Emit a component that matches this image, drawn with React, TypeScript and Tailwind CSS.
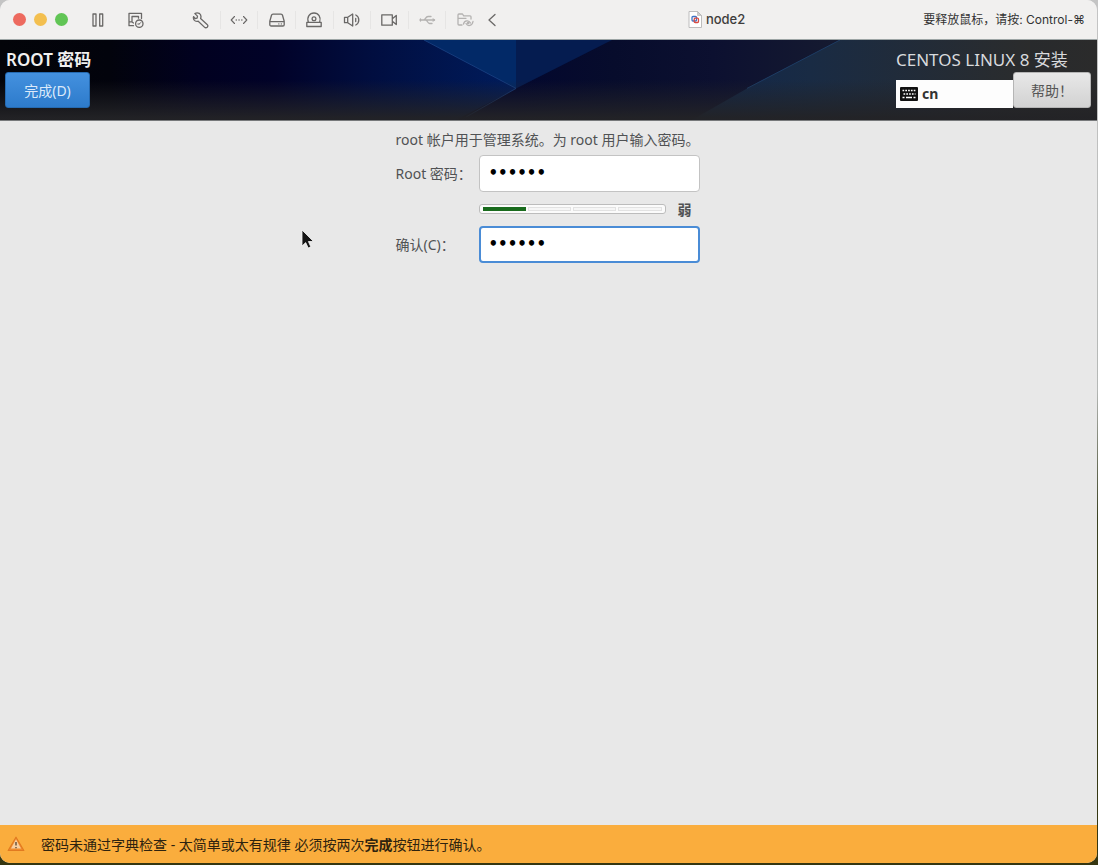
import { useState } from "react";
import type { ReactNode } from "react";

function Icon({ children, className = "" }: { children: ReactNode; className?: string }) {
    return (
        <svg viewBox="0 0 18 18" className={`size-[18px] ${className}`} fill="none" stroke="currentColor" strokeWidth="1.3" strokeLinecap="round" strokeLinejoin="round" aria-hidden="true">
            {children}
        </svg>
    );
}

const devices = [
    {
        label: "Settings",
        dim: false,
        icon: <path d="M7.2 2.3c-1.500-.7-3.200-.5-4.300.3l2.600 2.500-.4 2-2 .4L1.600 5.600c-.5 1.700.2 3.600 1.700 4.400 1 .5 2 .5 2.900.2l6.200 5.900c.8.8 2 .8 2.800.1.8-.8.7-2-.1-2.800L8.600 7.600c.7-2 .3-4.100-1.400-5.300Z" />,
    },
    {
        label: "Network",
        dim: false,
        icon: <><path d="M4.500 5.500 1.200 9l3.300 3.500M13.500 5.500 16.800 9l-3.300 3.500" strokeWidth="1.100" /><path d="M6.200 9h.1M9 9h.1M11.800 9h.1" strokeWidth="1.400" /></>,
    },
    {
        label: "Hard disk",
        dim: false,
        icon: <><path d="M5 3.200h8c.8 0 1.300.4 1.500 1.100l1.700 6v3.400c0 .8-.6 1.300-1.300 1.300H3.100c-.7 0-1.300-.5-1.300-1.300v-3.400l1.700-6c.2-.7.7-1.100 1.500-1.100ZM2 10.700h14" /><path d="M10.800 12.900h.1M13.300 12.900h.1" strokeWidth="1.200" /></>,
    },
    {
        label: "CD/DVD",
        dim: false,
        icon: <><path d="M3.300 11C1.700 6 4.600 2 9 2s7.300 4 5.700 9M1.800 11.300h14.400V15.500H1.800Z" /><circle cx="9" cy="7.700" r="1.900" /></>,
    },
    {
        label: "Sound",
        dim: false,
        icon: <><path d="M1.500 6.300h3.200L9.700 3v12l-5-3.300H1.500ZM4.700 6.300v5.400M12.800 4c4 2 4 8 0 10" /><path d="M12.700 7.500v3" /></>,
    },
    {
        label: "Camera",
        dim: false,
        icon: <path d="M1.800 3.800h10.500v10.400H1.800ZM12.300 7.800l4-3.300v9l-4-3.300" />,
    },
    {
        label: "USB",
        dim: true,
        icon: <><path d="M2 9h14.500M5.500 9c2 0 2-3.500 4.500-3.500h3M7.500 9c2 0 2 3.500 4 3.500h2.500" /><path d="M2.500 8v2M15 8l1.500 1-1.500 1" /></>,
    },
    {
        label: "Shared folders",
        dim: true,
        icon: <><path d="M6 14H3c-.6 0-1-.4-1-1V4c0-.6.4-1 1-1h3.500l1.200 1.800H14c.6 0 1 .4 1 1V8M2 7.300h8" /><path d="M7.500 13c.8-3.800 5.500-4.200 7-1M17 10.500c-.8 4.500-5.200 5.300-7 2" /><circle cx="12.200" cy="12" r=".7" /></>,
    },
];

function TitleBar() {
    return (
        <div className="flex h-10 items-center border-b border-[#9da5a5] bg-[#f1f0ef] text-[#6a6867]">
            <div className="flex gap-2 pl-[13px]">
                <button aria-label="Close" className="size-[13px] rounded-full bg-[#ed6a5f]" />
                <button aria-label="Minimize" className="size-[13px] rounded-full bg-[#f3bf4f]" />
                <button aria-label="Zoom" className="size-[13px] rounded-full bg-[#61c555]" />
            </div>
            <div className="flex gap-5 pl-[21px]">
                <button aria-label="Pause">
                    <Icon><path d="M4 3h3v12H4ZM10.700 3h3v12h-3Z" /></Icon>
                </button>
                <button aria-label="Snapshots">
                    <Icon><path d="M14.500 7.500V2.300H2v12.400h4.500M5 5.500h6.500v1.700M5 5.500v5.300H2.500M5 11l1.500 1" /><circle cx="12.300" cy="12.700" r="3.700" /><path d="m12.300 13 1.500-1.500M10.800 13h1.500" strokeWidth="1" /></Icon>
                </button>
            </div>
            <div className="ml-[38px] grid w-[301px] grid-cols-8 divide-x divide-[#e6e5e4]">
                {devices.map((d) => (
                    <button key={d.label} aria-label={d.label} className={`flex h-[18px] items-center justify-center ${d.dim ? "text-[#b4b2b1]" : ""}`}>
                        <Icon>{d.icon}</Icon>
                    </button>
                ))}
            </div>
            <button aria-label="Collapse">
                <Icon><path d="m11 3.500-6 5.500 6 5.500" /></Icon>
            </button>
            <div className="ml-auto flex items-center gap-1 text-[#3e3d3c]">
                <svg viewBox="0 0 14 17" className="h-[17px] w-[14px]" aria-hidden="true">
                    <path d="M1 .5h8.500l4 4v12H1Z" fill="#fff" stroke="#bdbdbd" />
                    <path d="M9.500.5v4h4Z" fill="#ccc" stroke="#aaa" strokeWidth=".5" />
                    <rect x="4" y="5.500" width="4.500" height="4.500" rx="1" fill="none" stroke="#3e73c4" strokeWidth="1.300" />
                    <rect x="6.200" y="7.200" width="4.300" height="4.300" rx="1" fill="none" stroke="#d84b43" strokeWidth="1.300" />
                </svg>
                <h1 className="font-[Inter,'Liberation_Sans',sans-serif] text-[13px] font-medium">node2</h1>
            </div>
            <p className="mr-3 ml-[178px] whitespace-nowrap font-[Inter,'Noto_Sans_CJK_SC',sans-serif] text-[12px] text-[#333]">要释放鼠标，请按: Control-⌘</p>
        </div>
    );
}

function HeaderArt() {
    return (
        <svg viewBox="0 0 1097 81" preserveAspectRatio="none" className="absolute inset-0 size-full" aria-hidden="true">
            <defs>
                <linearGradient id="base">
                    <stop offset="0" stopColor="#030409" />
                    <stop offset=".1" stopColor="#02030c" />
                    <stop offset=".18" stopColor="#010120" />
                    <stop offset=".25" stopColor="#010228" />
                    <stop offset=".34" stopColor="#010e40" />
                    <stop offset=".47" stopColor="#001c5c" />
                    <stop offset=".471" stopColor="#03072e" />
                    <stop offset=".56" stopColor="#070c2c" />
                    <stop offset=".65" stopColor="#0c1030" />
                    <stop offset=".76" stopColor="#151a30" />
                    <stop offset=".88" stopColor="#25292e" />
                    <stop offset="1" stopColor="#2b2b2b" />
                </linearGradient>
                <linearGradient id="rightFacet">
                    <stop offset="0" stopColor="#11264a" />
                    <stop offset=".35" stopColor="#192b44" />
                    <stop offset="1" stopColor="#2b2c2c" />
                </linearGradient>
                <linearGradient id="shade" x2="0" y2="1">
                    <stop offset="0" stopColor="#232326" stopOpacity="0" />
                    <stop offset=".5" stopColor="#232326" stopOpacity="0" />
                    <stop offset=".97" stopColor="#232326" stopOpacity=".95" />
                </linearGradient>
            </defs>
            <path d="M0 0h1097v81H0Z" fill="url(#base)" />
            <path d="M517 49 456 81h61Z" fill="#03072e" />
            <path d="M424 0h92v49Z" fill="#022967" />
            <path d="M516 0h96l-96 49Z" fill="#051c50" />
            <path d="m424 0 92 49-50 29" fill="none" stroke="#1c4385" strokeOpacity=".8" />
            <path d="M840 0h190v81H692l55-32Z" fill="url(#rightFacet)" />
            <path d="m840 0-93 49" fill="none" stroke="#1d3c64" />
            <path d="M0 0h1097v81H0Z" fill="url(#shade)" />
        </svg>
    );
}

function Header() {
    return (
        <header className="relative border-b border-[#77797b] bg-[#07091d]">
            <HeaderArt />
            <div className="relative flex justify-between pt-2 pr-[6px] pb-3 pl-[5px]">
                <div className="flex flex-col items-start">
                    <h2 className="h-6 pl-px text-[17px] leading-6 font-semibold text-[#f0f0f0]">ROOT 密码</h2>
                    <button className="h-9 w-[85px] rounded-[3px] border border-[#256ab1] bg-linear-to-b from-[#4491df] to-[#2d7bcb] text-[14px] text-[#dceafa]">完成(D)</button>
                </div>
                <div>
                    <p className="h-6 text-[17px] leading-6 text-[#d8dadd]">CENTOS LINUX 8 安装</p>
                    <div className="flex items-end">
                        <button className="flex h-7 w-[117px] items-center gap-1 bg-[#fdfdfd] pl-1 text-[14px] leading-5 font-bold text-[#333]">
                            <svg viewBox="0 0 18 14" className="h-[14px] w-[18px]" aria-hidden="true">
                                <rect width="18" height="14" rx="1" fill="#111" />
                                <path d="M2.500 3.500h13" stroke="#fff" strokeWidth="1.700" strokeDasharray="1.700 1.100" />
                                <path d="M3.500 7h12" stroke="#fff" strokeWidth="1.700" strokeDasharray="1.700 1.100" />
                                <path d="M2.500 10.500h2M6 10.500h6M13.500 10.500h2" stroke="#fff" strokeWidth="1.700" />
                            </svg>
                            cn
                        </button>
                        <button className="h-9 w-[78px] rounded-[3px] border border-[#b5b5b5] bg-linear-to-b from-[#e8e8e8] to-[#d2d2d2] text-[14px] text-[#555]">帮助！</button>
                    </div>
                </div>
            </div>
        </header>
    );
}

function StrengthBar({ level }: { level: number }) {
    return (
        <div role="meter" aria-label="密码强度" aria-valuemin={0} aria-valuemax={4} aria-valuenow={level} className="grid h-[10px] w-[187px] grid-cols-4 items-center gap-[2px] rounded-[3px] border border-[#bcbcbc] bg-[#fbfbfb] px-[3px]">
            {[0, 1, 2, 3].map((i) => (
                <span key={i} className={i < level ? "h-1 bg-[#196b1d]" : "h-1 border border-[#e2e2e2] bg-[#f6f6f6]"} />
            ))}
        </div>
    );
}

function PasswordForm() {
    const [password, setPassword] = useState("123456");
    const [confirm, setConfirm] = useState("123456");
    const field = "h-[37px] w-[221px] rounded-[4px] bg-white pb-[2px] font-['DejaVu_Sans',sans-serif] text-[15px] font-bold text-black outline-none";

    return (
        <form className="mx-auto w-[306px] pt-2 text-[14px] text-[#505254]">
            <p className="h-[26px] leading-[22px] whitespace-nowrap">root 帐户用于管理系统。为 root 用户输入密码。</p>
            <div className="flex items-center">
                <label htmlFor="password" className="w-[83px]">Root 密码：</label>
                <input id="password" type="password" value={password} onChange={(e) => setPassword(e.target.value)} className={`${field} border border-[#c3c3c3] px-[9px]`} />
            </div>
            <div className="flex h-[34px] items-center pl-[83px]">
                <StrengthBar level={1} />
                <strong className="ml-3">弱</strong>
            </div>
            <div className="flex items-center">
                <label htmlFor="confirm" className="w-[83px]">确认(C)：</label>
                <input id="confirm" type="password" value={confirm} onChange={(e) => setConfirm(e.target.value)} className={`${field} border-2 border-[#4a8cd6] px-2`} />
            </div>
        </form>
    );
}

function Pointer() {
    return (
        <svg viewBox="0 0 14 21" className="absolute top-[229px] left-[301px] h-[21px] w-[14px]" aria-hidden="true">
            <path d="M1 1v16l3.700-3.400L7.200 19l2.600-1.200L7.400 12.500h5.100Z" fill="#151515" stroke="#f8f8f8" strokeWidth=".8" />
        </svg>
    );
}

function WarningBar() {
    return (
        <footer className="flex h-[38px] items-center bg-[#faad3d] pl-[7px] text-[14px] text-[#2e230f]">
            <svg viewBox="0 0 18 16" className="mr-4 h-4 w-[18px]" aria-hidden="true">
                <path d="M9 1.200 16.800 14.500H1.200Z" fill="#f08b2b" stroke="#e27a20" strokeWidth="1.200" strokeLinejoin="round" />
                <path d="M9 3.200 14 12.500H4Z" fill="#f8cfa0" />
                <path d="M9 6v3.500M9 11v1.200" stroke="#69533c" strokeWidth="1.500" />
            </svg>
            <p>密码未通过字典检查 - 太简单或太有规律 必须按两次<b>完成</b>按钮进行确认。</p>
        </footer>
    );
}

export default function App() {
    return (
        <div className="flex min-h-screen flex-col bg-[linear-gradient(#c4c4c4_0%,#b5b8b6_45%,#39401f_60%,#353611_100%)] pr-px pb-[2px] font-['Noto_Sans','Noto_Sans_CJK_SC',sans-serif]">
            <div className="relative flex flex-1 flex-col overflow-hidden rounded-[10px] bg-[#e8e8e8]">
                <TitleBar />
                <Header />
                <main className="flex-1">
                    <PasswordForm />
                </main>
                <WarningBar />
                <Pointer />
            </div>
        </div>
    );
}
